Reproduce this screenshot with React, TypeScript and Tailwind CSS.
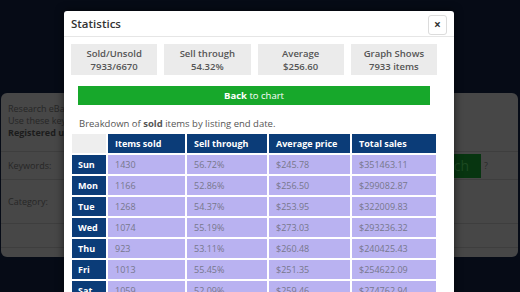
const rows = [
  { day: "Sun", sold: "1430", through: "56.72%", avg: "$245.78", total: "$351463.11" },
  { day: "Mon", sold: "1166", through: "52.86%", avg: "$256.50", total: "$299082.87" },
  { day: "Tue", sold: "1268", through: "54.37%", avg: "$253.95", total: "$322009.83" },
  { day: "Wed", sold: "1074", through: "55.19%", avg: "$273.03", total: "$293236.32" },
  { day: "Thu", sold: "923", through: "53.11%", avg: "$260.48", total: "$240425.43" },
  { day: "Fri", sold: "1013", through: "55.45%", avg: "$251.35", total: "$254622.09" },
  { day: "Sat", sold: "1059", through: "52.09%", avg: "$259.46", total: "$274762.94" },
];

const stats = [
  { label: "Sold/Unsold", value: "7933/6670" },
  { label: "Sell through", value: "54.32%" },
  { label: "Average", value: "$256.60" },
  { label: "Graph Shows", value: "7933 items" },
];

function BackgroundPage() {
  return (
    <div className="pt-[93px]">
      <div className="ml-[1px] w-[517px] h-[164px] rounded-[6px] bg-[#474747] text-[#262626] text-[9px] leading-[12px]">
        <div className="px-[7px] pt-[10px] pb-[12px]">
          <p className="whitespace-nowrap">Research eBay sold listings to find out what sells and when.</p>
          <p className="whitespace-nowrap">Use these keywords to narrow down your results.</p>
          <p className="whitespace-nowrap font-bold text-[#1c1c1c]">Registered users get full access.</p>
        </div>
        <div className="border-t border-[#3e3e3e]">
          <div className="flex items-center h-[28px] border-b border-[#3e3e3e] pl-[7px]">
            <span className="w-[60px]">Keywords:</span>
            <div className="ml-auto flex items-center gap-[3px] pr-[30px]">
              <div className="h-[24px] w-[69px] bg-[#073510] text-[#1d4a22] text-[14px] leading-[24px] text-right pr-[12px]">
                Search
              </div>
              <span className="text-[#2a2a2a] text-[9px]">?</span>
            </div>
          </div>
          <div className="flex items-center h-[44px] border-b border-[#3e3e3e] pl-[7px]">
            <span>Category:</span>
          </div>
          <div className="h-[24px] border-b border-[#3e3e3e]" />
        </div>
      </div>
    </div>
  );
}

function StatisticsModal() {
  return (
    <div className="absolute left-[64px] top-[11px] w-[390px] h-[300px] bg-white rounded-t-[3px] shadow-[0_0_8px_rgba(0,0,0,0.6)] text-[#444]">
      <div className="flex items-center justify-between h-[26px] pl-[7px] pr-[7px] border-b border-[#e6e6e6]">
        <h2 className="text-[11.5px] font-semibold text-[#333]">Statistics</h2>
        <button className="w-[19px] h-[20px] mt-[2px] border border-[#dcdcdc] rounded-[3px] bg-white text-[12px] leading-none font-bold text-[#333] flex items-center justify-center">
          ×
        </button>
      </div>

      <div className="pl-[7px] pr-[17px] pt-[7px]">
        <div className="grid grid-cols-4 gap-[7px]">
          {stats.map((s) => (
            <div
              key={s.label}
              className="h-[31px] bg-[#ebebeb] flex flex-col items-center justify-center text-[9.5px] leading-[13px] font-semibold text-[#555]"
            >
              <span>{s.label}</span>
              <span>{s.value}</span>
            </div>
          ))}
        </div>

        <button className="mt-[11px] mx-[7px] w-[352px] h-[19px] bg-[#17a82b] text-white text-[9.5px] leading-[19px] text-center">
          <span className="font-bold">Back</span> to chart
        </button>

        <p className="mt-[12px] px-[8px] text-[9.5px] leading-[13px] text-[#555]">
          Breakdown of <span className="font-bold">sold</span> items by listing end date.
        </p>

        <table className="mt-[2px] -ml-[1px] w-[368px] table-fixed border-separate border-spacing-[2px] text-[9px]">
          <colgroup>
            <col className="w-[34px]" />
            <col className="w-[77px]" />
            <col className="w-[80px]" />
            <col className="w-[81px]" />
            <col className="w-[84px]" />
          </colgroup>
          <thead>
            <tr className="h-[19px]">
              <th className="bg-[#eeeeee]" />
              <th className="bg-[#0b3c78] text-white font-bold text-left pl-[7px]">Items sold</th>
              <th className="bg-[#0b3c78] text-white font-bold text-left pl-[7px]">Sell through</th>
              <th className="bg-[#0b3c78] text-white font-bold text-left pl-[7px]">Average price</th>
              <th className="bg-[#0b3c78] text-white font-bold text-left pl-[7px]">Total sales</th>
            </tr>
          </thead>
          <tbody>
            {rows.map((r) => (
              <tr key={r.day} className="h-[19px]">
                <td className="bg-[#0b3c78] text-white font-bold pl-[6px]">{r.day}</td>
                <td className="bg-[#b9b2f1] text-[#77778c] pl-[7px]">{r.sold}</td>
                <td className="bg-[#b9b2f1] text-[#77778c] pl-[7px]">{r.through}</td>
                <td className="bg-[#b9b2f1] text-[#77778c] pl-[7px]">{r.avg}</td>
                <td className="bg-[#b9b2f1] text-[#77778c] pl-[7px]">{r.total}</td>
              </tr>
            ))}
          </tbody>
        </table>
      </div>
    </div>
  );
}

export default function App() {
  return (
    <div
      className="relative w-[520px] h-[292px] overflow-hidden bg-[#060b16]"
      style={{ fontFamily: '"Open Sans", "Liberation Sans", sans-serif' }}
    >
      <BackgroundPage />
      <StatisticsModal />
    </div>
  );
}
